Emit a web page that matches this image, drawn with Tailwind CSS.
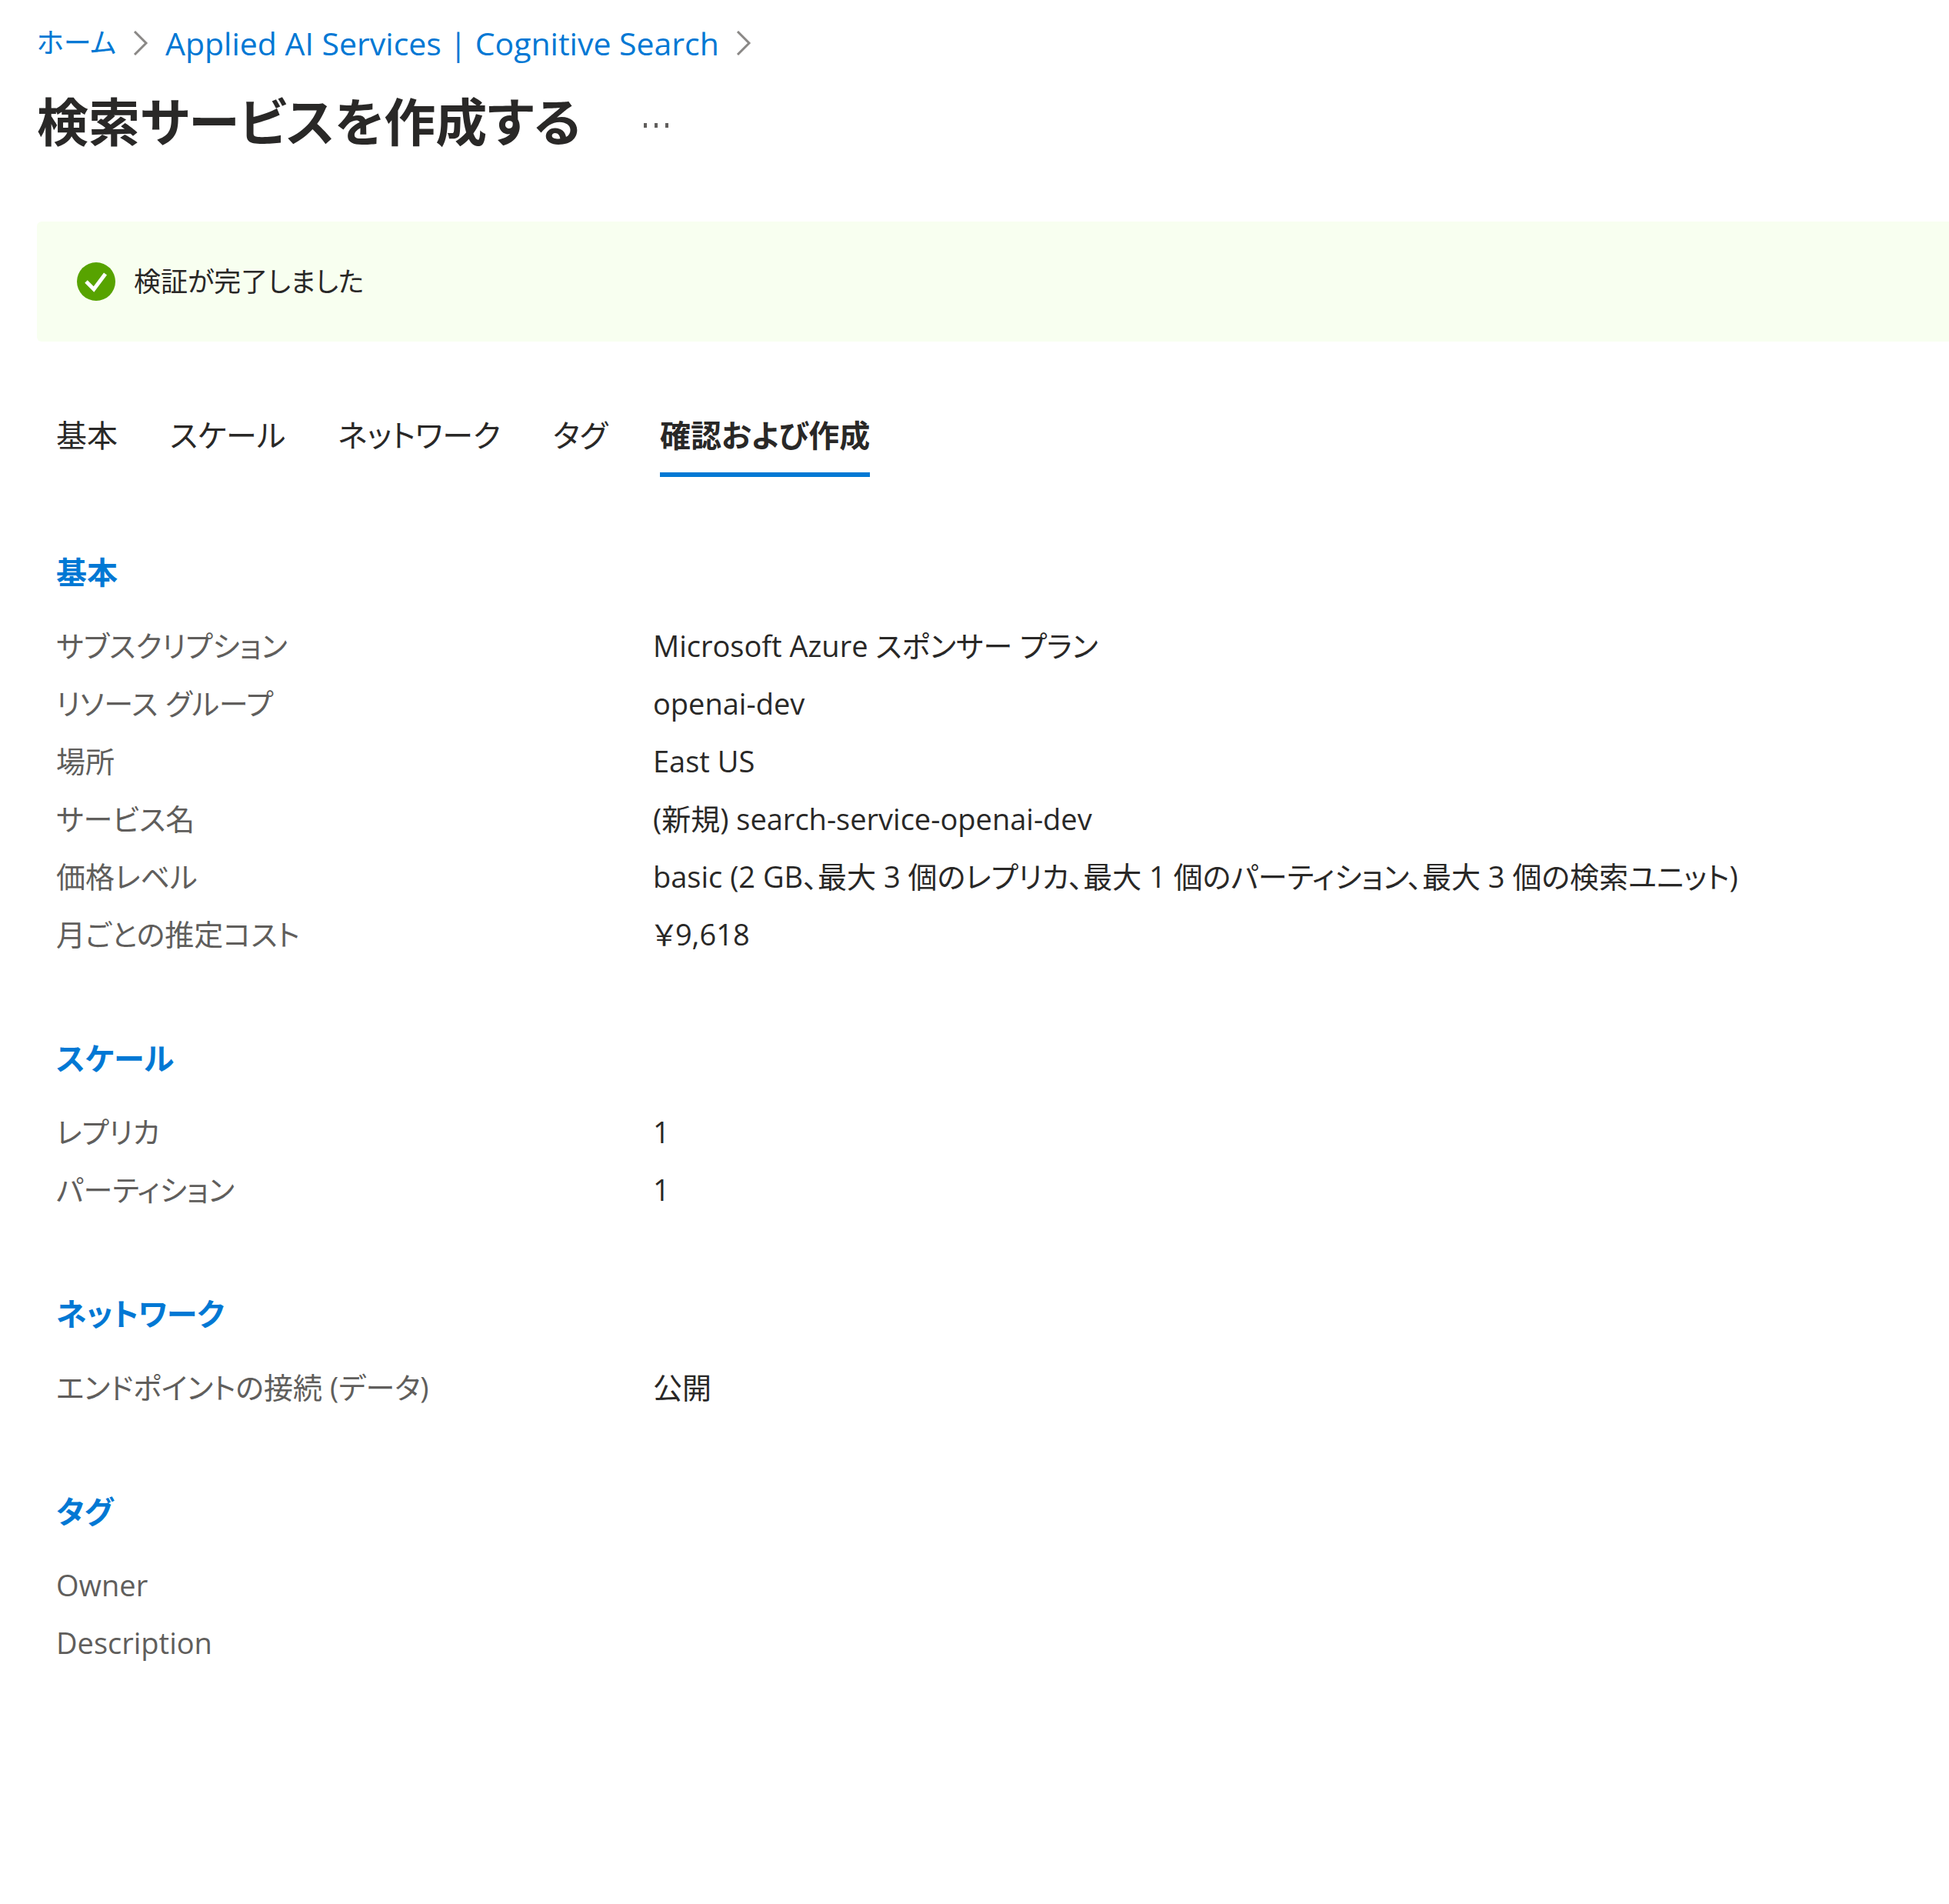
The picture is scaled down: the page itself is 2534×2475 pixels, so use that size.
<!DOCTYPE html>
<html lang="ja">
<head>
  <meta charset="UTF-8" />
  <title>検索サービスを作成する</title>
  <meta name="viewport" content="width=device-width, initial-scale=1.0" />
  <script src="https://cdn.jsdelivr.net/npm/@tailwindcss/browser@4"></script>
</head>
<body class="bg-white text-[#292827] font-['Open_Sans','Noto_Sans_CJK_JP',sans-serif] [font-feature-settings:'palt'] min-h-screen">

  <!-- Header -->
  <header class="pl-12 pt-6">
    <nav aria-label="Breadcrumb" class="flex items-center gap-[22px] text-[41px] leading-[64px] text-[#0078d4]">
      <a href="#" class="text-[36px]">ホーム</a>
      <svg class="w-5 h-8" viewBox="0 0 20 32" fill="none" stroke="#8a8886" stroke-width="3"><path d="M2 1l15 15L2 31" /></svg>
      <a href="#">Applied AI Services | Cognitive Search</a>
      <svg class="w-5 h-8" viewBox="0 0 20 32" fill="none" stroke="#8a8886" stroke-width="3"><path d="M2 1l15 15L2 31" /></svg>
    </nav>
    <div class="flex items-center mt-5 gap-20">
      <h1 class="text-[67px] leading-[100px] font-semibold">検索サービスを作成する</h1>
      <button type="button" aria-label="その他" class="pt-2">
        <svg class="w-10 h-10" viewBox="0 0 40 40" fill="#605e5c"><path d="M2 18h4v6h-4zM16 18h4v6h-4zM30 18h4v6h-4z" /></svg>
      </button>
    </div>
  </header>

  <!-- Validation banner -->
  <div role="status" class="ml-12 mt-20 h-[156px] pl-[52px] flex items-center gap-6 rounded-l-md bg-[#f8fff0] text-[35px]">
    <svg class="w-[50px] h-[50px]" viewBox="0 0 50 50"><circle cx="25" cy="25" r="25" fill="#57a300" /><path d="M12 25l10 10 15-20" fill="none" stroke="#fff" stroke-width="5" /></svg>
    <span>検証が完了しました</span>
  </div>

  <main class="px-[73px] pt-[84px]">
    <!-- Tabs -->
    <div role="tablist" class="flex gap-17 text-[40px] leading-[76px]">
      <button type="button" role="tab" class="pb-2.5 border-b-6 border-transparent">基本</button>
      <button type="button" role="tab" class="pb-2.5 border-b-6 border-transparent">スケール</button>
      <button type="button" role="tab" class="pb-2.5 border-b-6 border-transparent">ネットワーク</button>
      <button type="button" role="tab" class="pb-2.5 border-b-6 border-transparent">タグ</button>
      <button type="button" role="tab" aria-selected="true" class="pb-2.5 border-b-6 border-[#0078d4] font-semibold">確認および作成</button>
    </div>

    <!-- Summary -->
    <div class="mt-[94px] flex flex-col gap-[94px] text-[38px] leading-[75px]">
      <section>
        <h2 class="mb-7 text-[40px] leading-[60px] font-semibold text-[#0078d4]">基本</h2>
        <dl class="grid grid-cols-[776px_1fr]">
          <dt class="text-[#605e5c]">サブスクリプション</dt><dd>Microsoft Azure スポンサー プラン</dd>
          <dt class="text-[#605e5c]">リソース グループ</dt><dd>openai-dev</dd>
          <dt class="text-[#605e5c]">場所</dt><dd>East US</dd>
          <dt class="text-[#605e5c]">サービス名</dt><dd>(新規) search-service-openai-dev</dd>
          <dt class="text-[#605e5c]">価格レベル</dt><dd>basic (2 GB、最大 3 個のレプリカ、最大 1 個のパーティション、最大 3 個の検索ユニット)</dd>
          <dt class="text-[#605e5c]">月ごとの推定コスト</dt><dd>￥9,618</dd>
        </dl>
      </section>
      <section>
        <h2 class="mb-7 text-[40px] leading-[60px] font-semibold text-[#0078d4]">スケール</h2>
        <dl class="grid grid-cols-[776px_1fr]">
          <dt class="text-[#605e5c]">レプリカ</dt><dd>1</dd>
          <dt class="text-[#605e5c]">パーティション</dt><dd>1</dd>
        </dl>
      </section>
      <section>
        <h2 class="mb-7 text-[40px] leading-[60px] font-semibold text-[#0078d4]">ネットワーク</h2>
        <dl class="grid grid-cols-[776px_1fr]">
          <dt class="text-[#605e5c]">エンドポイントの接続 (データ)</dt><dd>公開</dd>
        </dl>
      </section>
      <section>
        <h2 class="mb-7 text-[40px] leading-[60px] font-semibold text-[#0078d4]">タグ</h2>
        <dl class="grid grid-cols-[776px_1fr]">
          <dt class="text-[#605e5c]">Owner</dt><dd></dd>
          <dt class="text-[#605e5c]">Description</dt><dd></dd>
        </dl>
      </section>
    </div>
  </main>

</body>
</html>
